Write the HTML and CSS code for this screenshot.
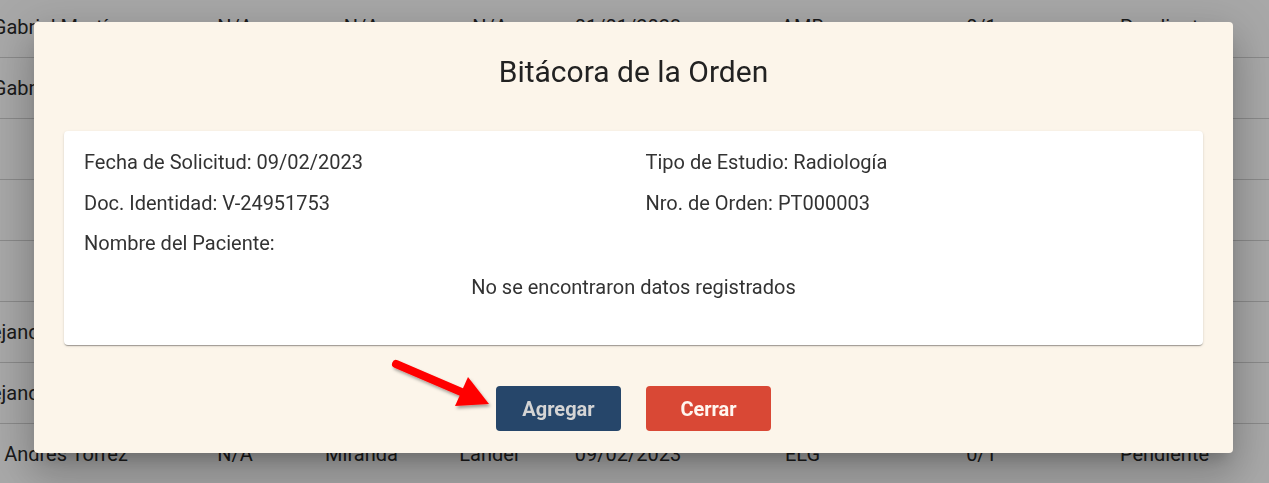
FILE: index.html
```html
<!DOCTYPE html>
<html lang="es">
<head>
<meta charset="utf-8">
<title>Bitácora de la Orden</title>
<link rel="stylesheet" href="styles.css">
</head>
<body>
  <div class="table">
    <div class="row first">
      <div class="cell c1">Gabriel Martínez</div><div class="cell c2">N/A</div><div class="cell c3">N/A</div><div class="cell c4">N/A</div><div class="cell c5">01/01/2023</div><div class="cell c6">AMB</div><div class="cell c7">0/1</div><div class="cell c8">Pendiente</div>
    </div>
    <div class="row">
      <div class="cell c1">Gabriel Martínez</div><div class="cell c2">N/A</div><div class="cell c3">N/A</div><div class="cell c4">N/A</div><div class="cell c5">01/01/2023</div><div class="cell c6">AMB</div><div class="cell c7">0/1</div><div class="cell c8">Pendiente</div>
    </div>
    <div class="row">
      <div class="cell c1">Ana</div><div class="cell c2">N/A</div><div class="cell c3">N/A</div><div class="cell c4">N/A</div><div class="cell c5">02/01/2023</div><div class="cell c6">AMB</div><div class="cell c7">0/1</div><div class="cell c8">Pendiente</div>
    </div>
    <div class="row">
      <div class="cell c1">Luis</div><div class="cell c2">N/A</div><div class="cell c3">N/A</div><div class="cell c4">N/A</div><div class="cell c5">03/01/2023</div><div class="cell c6">AMB</div><div class="cell c7">0/1</div><div class="cell c8">Pendiente</div>
    </div>
    <div class="row">
      <div class="cell c1">Eva</div><div class="cell c2">N/A</div><div class="cell c3">N/A</div><div class="cell c4">N/A</div><div class="cell c5">04/01/2023</div><div class="cell c6">AMB</div><div class="cell c7">0/1</div><div class="cell c8">Pendiente</div>
    </div>
    <div class="row">
      <div class="cell c1">Alejandro Hernández</div><div class="cell c2">N/A</div><div class="cell c3">N/A</div><div class="cell c4">N/A</div><div class="cell c5">05/01/2023</div><div class="cell c6">AMB</div><div class="cell c7">0/1</div><div class="cell c8">Pendiente</div>
    </div>
    <div class="row">
      <div class="cell c1">Alejandro Hernández</div><div class="cell c2">N/A</div><div class="cell c3">N/A</div><div class="cell c4">N/A</div><div class="cell c5">06/01/2023</div><div class="cell c6">AMB</div><div class="cell c7">0/1</div><div class="cell c8">Pendiente</div>
    </div>
    <div class="row">
      <div class="cell c1">Andres Torrez</div><div class="cell c2">N/A</div><div class="cell c3">Miranda</div><div class="cell c4">Lander</div><div class="cell c5">09/02/2023</div><div class="cell c6">ELG</div><div class="cell c7">0/1</div><div class="cell c8">Pendiente</div>
    </div>
  </div>

  <div class="backdrop"></div>

  <div class="dialog">
    <h2 class="dialog-title">Bitácora de la Orden</h2>
    <div class="card">
      <div class="info-grid">
        <div class="info">Fecha de Solicitud: 09/02/2023</div>
        <div class="info">Tipo de Estudio: Radiología</div>
        <div class="info">Doc. Identidad: V-24951753</div>
        <div class="info">Nro. de Orden: PT000003</div>
        <div class="info">Nombre del Paciente:</div>
        <div class="info"></div>
      </div>
      <p class="empty">No se encontraron datos registrados</p>
    </div>
    <div class="actions">
      <button class="btn btn-primary">Agregar</button>
      <button class="btn btn-danger">Cerrar</button>
    </div>
  </div>

  <svg class="arrow" width="120" height="70" viewBox="385 352 120 70" xmlns="http://www.w3.org/2000/svg">
    <defs>
      <filter id="sh" x="-20%" y="-20%" width="140%" height="160%">
        <feDropShadow dx="1.5" dy="2.5" stdDeviation="1.6" flood-color="#000" flood-opacity="0.35"/>
      </filter>
    </defs>
    <g filter="url(#sh)">
      <line x1="396" y1="364" x2="466" y2="394" stroke="#ff0000" stroke-width="8" stroke-linecap="round"/>
      <polygon points="489,404 468,377 455,406" fill="#ff0000"/>
    </g>
  </svg>
</body>
</html>
```

FILE: styles.css
```css
html, body {
  margin: 0;
  padding: 0;
}

body {
  width: 1269px;
  height: 483px;
  overflow: hidden;
  background: #ffffff;
  font-family: Roboto, "Liberation Sans", Arial, sans-serif;
  color: #333333;
  position: relative;
}

.table {
  display: flex;
  flex-direction: column;
}

.row {
  display: flex;
  height: 61px;
  border-bottom: 1px solid #d2d2d2;
  box-sizing: border-box;
  align-items: center;
  font-size: 20px;
  color: #2a2a2a;
}

.row.first {
  height: 58px;
  padding-bottom: 3px;
}

.cell {
  display: flex;
  justify-content: center;
  white-space: nowrap;
  flex: none;
}

.c1 { width: 132px; }
.c2 { width: 126px; margin-left: 40px; }
.c3 { width: 127px; }
.c4 { width: 128px; margin-left: 1px; }
.c5 { width: 138px; margin-left: 5px; }
.c6 { width: 175px; margin-left: 18px; }
.c7 { width: 179px; margin-left: 2px; }
.c8 { width: 183px; margin-left: 2px; }

.backdrop {
  position: fixed;
  inset: 0;
  background: rgba(0, 0, 0, 0.34);
}

.dialog {
  position: absolute;
  left: 34px;
  top: 22px;
  width: 1199px;
  height: 431px;
  box-sizing: border-box;
  background: #fcf5ea;
  border-radius: 4px;
  padding: 32px 30px 22px;
  display: flex;
  flex-direction: column;
  box-shadow: 0 11px 15px -7px rgba(0, 0, 0, 0.2),
              0 24px 38px 3px rgba(0, 0, 0, 0.14),
              0 9px 46px 8px rgba(0, 0, 0, 0.12);
}

.dialog-title {
  margin: 0;
  text-align: center;
  font-size: 30px;
  line-height: 36px;
  font-weight: 400;
  color: #222222;
}

.card {
  margin-top: 41px;
  background: #ffffff;
  border-radius: 4px;
  height: 214px;
  box-sizing: border-box;
  padding: 19px 20px 0;
  box-shadow: 0 2px 1px -1px rgba(0, 0, 0, 0.2),
              0 1px 1px 0 rgba(0, 0, 0, 0.14),
              0 1px 3px 0 rgba(0, 0, 0, 0.12);
}

.info-grid {
  display: grid;
  grid-template-columns: 1fr 1fr;
  column-gap: 24px;
  row-gap: 16.5px;
}

.info {
  font-size: 20px;
  line-height: 24px;
  color: #333333;
  min-height: 24px;
}

.empty {
  margin: 20px 0 0;
  text-align: center;
  font-size: 20px;
  line-height: 24px;
  color: #333333;
}

.actions {
  margin-top: 41px;
  display: flex;
  justify-content: center;
  gap: 25px;
}

.btn {
  width: 125px;
  height: 45px;
  border: none;
  border-radius: 4px;
  font-family: Roboto, "Liberation Sans", Arial, sans-serif;
  font-size: 20px;
  font-weight: 700;
  padding: 0;
  cursor: pointer;
}

.btn-primary {
  background: #26466a;
  color: #d4d4d4;
}

.btn-danger {
  background: #d94835;
  color: #fff6ef;
}

.arrow {
  position: absolute;
  left: 385px;
  top: 352px;
}
```
